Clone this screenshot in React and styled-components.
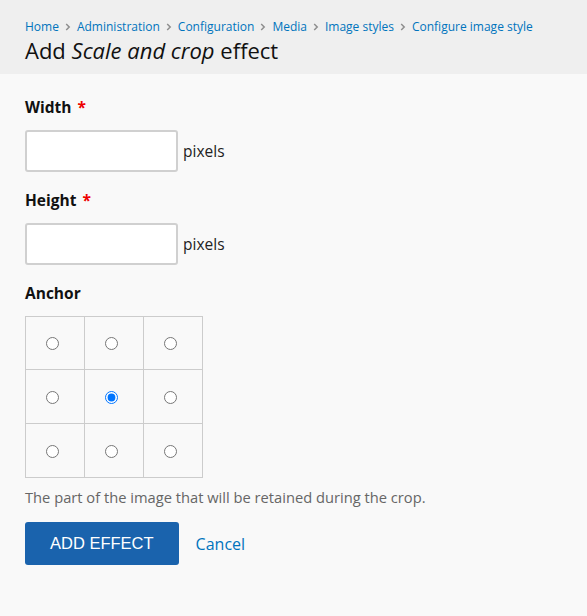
import React, { useState } from "react";
import styled, { createGlobalStyle } from "styled-components";

const GlobalStyle = createGlobalStyle`
  html, body {
    margin: 0;
    padding: 0;
    background: #f9f9f9;
  }
  body {
    font-family: "Open Sans", "DejaVu Sans", sans-serif;
    color: #222;
  }
`;

const Header = styled.header`
  background: #efefef;
  padding: 18px 25px 9px;
`;

const Breadcrumb = styled.nav`
  display: flex;
  flex-wrap: wrap;
  align-items: center;
  font-size: 12px;
  line-height: 18px;
`;

const Crumb = styled.a`
  color: #0074bd;
  text-decoration: none;
`;

const Sep = styled.span`
  margin: 0 6px;
  display: inline-flex;
  align-items: center;
`;

const Title = styled.h1`
  margin: 0;
  font-size: 22px;
  line-height: 29px;
  font-weight: 400;
  color: #111;

  em {
    font-style: italic;
  }
`;

const Main = styled.main`
  padding: 21px 25px 40px;
`;

const FormItem = styled.div`
  margin-bottom: 16px;
`;

const Label = styled.label`
  display: block;
  font-weight: 700;
  font-size: 15.5px;
  line-height: 24px;
  color: #111;
  margin-bottom: 11px;
`;

const Required = styled.span`
  color: #e00;
  margin-left: 2px;
`;

const InputRow = styled.div`
  display: flex;
  align-items: center;
  gap: 5px;
`;

const TextInput = styled.input`
  box-sizing: border-box;
  width: 153px;
  height: 42px;
  border: 2px solid #d0d0d0;
  border-radius: 3px;
  background: #fff;
  padding: 4px 8px;
  font: inherit;
  font-size: 15px;
  outline: none;
`;

const Suffix = styled.span`
  font-size: 15.5px;
  color: #222;
`;

const AnchorGrid = styled.div`
  display: grid;
  grid-template-columns: repeat(3, 59px);
  grid-template-rows: 53px 54px 54px;
  width: max-content;
  border-top: 1px solid #ccc;
  border-left: 1px solid #ccc;
`;

const Cell = styled.label`
  display: flex;
  align-items: center;
  justify-content: center;
  border-right: 1px solid #ccc;
  border-bottom: 1px solid #ccc;

  input {
    margin: 1px 5px 0 0;
    width: 13px;
    height: 13px;
  }
`;

const Description = styled.p`
  margin: 9px 0 15px;
  font-size: 14.7px;
  line-height: 20px;
  color: #666;
`;

const Actions = styled.div`
  display: flex;
  align-items: center;
  gap: 17px;
`;

const PrimaryButton = styled.button`
  background: #1a63ad;
  color: #fff;
  border: none;
  border-radius: 3px;
  height: 43px;
  padding: 0 25px;
  font-family: "Liberation Sans", Arial, sans-serif;
  font-size: 16.5px;
  cursor: pointer;
`;

const CancelLink = styled.a`
  color: #0074bd;
  text-decoration: none;
  font-size: 16px;
`;

const crumbs = [
  "Home",
  "Administration",
  "Configuration",
  "Media",
  "Image styles",
  "Configure image style",
];

const anchors = [
  "left-top", "center-top", "right-top",
  "left-center", "center-center", "right-center",
  "left-bottom", "center-bottom", "right-bottom",
];

function Chevron() {
  return (
    <svg width="6" height="8" viewBox="0 0 6 8">
      <path d="M1.2 1 L4.2 4 L1.2 7" fill="none" stroke="#8e8e8e" strokeWidth="1.5" />
    </svg>
  );
}

export default function App() {
  const [anchor, setAnchor] = useState("center-center");

  return (
    <>
      <GlobalStyle />
      <Header>
        <Breadcrumb>
          {crumbs.map((c, i) => (
            <React.Fragment key={c}>
              {i > 0 && (
                <Sep>
                  <Chevron />
                </Sep>
              )}
              <Crumb href="#">{c}</Crumb>
            </React.Fragment>
          ))}
        </Breadcrumb>
        <Title>
          Add <em>Scale and crop</em> effect
        </Title>
      </Header>
      <Main>
        <FormItem>
          <Label>
            Width <Required>*</Required>
          </Label>
          <InputRow>
            <TextInput type="text" />
            <Suffix>pixels</Suffix>
          </InputRow>
        </FormItem>
        <FormItem>
          <Label>
            Height <Required>*</Required>
          </Label>
          <InputRow>
            <TextInput type="text" />
            <Suffix>pixels</Suffix>
          </InputRow>
        </FormItem>
        <div>
          <Label>Anchor</Label>
          <AnchorGrid>
            {anchors.map((a) => (
              <Cell key={a}>
                <input
                  type="radio"
                  name="anchor"
                  checked={anchor === a}
                  onChange={() => setAnchor(a)}
                />
              </Cell>
            ))}
          </AnchorGrid>
          <Description>
            The part of the image that will be retained during the crop.
          </Description>
        </div>
        <Actions>
          <PrimaryButton>ADD EFFECT</PrimaryButton>
          <CancelLink href="#">Cancel</CancelLink>
        </Actions>
      </Main>
    </>
  );
}
